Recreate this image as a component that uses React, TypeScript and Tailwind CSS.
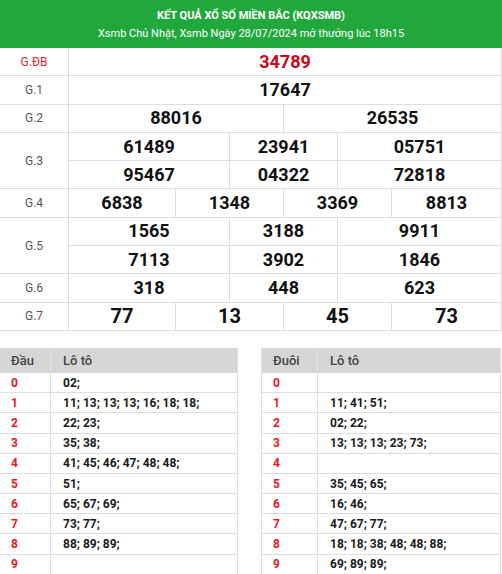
import React from "react";

const font = { fontFamily: "Roboto, 'Noto Sans', Arial, sans-serif" };

function Num({ children, big, red }: { children: React.ReactNode; big?: boolean; red?: boolean }) {
  return (
    <span
      className={`font-bold ${big ? "text-[20px]" : "text-[18px]"} ${red ? "text-[#d0021b]" : "text-[#111]"} leading-none`}
    >
      {children}
    </span>
  );
}

function Cell({ children, last }: { children: React.ReactNode; last?: boolean }) {
  return (
    <div className={`flex items-center justify-center ${last ? "" : "border-r border-[#dedede]"}`}>{children}</div>
  );
}

function Row({
  label,
  red,
  rows,
  cols,
}: {
  label: string;
  red?: boolean;
  rows: { nums: string[]; big?: boolean; red?: boolean }[];
  cols: string;
}) {
  return (
    <div className="flex">
      <div
        className={`w-[69px] shrink-0 border-r border-b border-[#dedede] flex items-center justify-center text-[12px] ${
          red ? "text-[#e8262d]" : "text-[#555]"
        }`}
      >
        {label}
      </div>
      <div className="flex-1 flex flex-col">
        {rows.map((r, i) => (
          <div key={i} className={`grid ${cols} h-[28.3px] border-b border-[#dedede]`}>
            {r.nums.map((n, j) => (
              <Cell key={j} last={j === r.nums.length - 1}>
                <Num big={r.big} red={r.red}>
                  {n}
                </Num>
              </Cell>
            ))}
          </div>
        ))}
      </div>
    </div>
  );
}

const dau: [string, string][] = [
  ["0", "02;"],
  ["1", "11; 13; 13; 13; 16; 18; 18;"],
  ["2", "22; 23;"],
  ["3", "35; 38;"],
  ["4", "41; 45; 46; 47; 48; 48;"],
  ["5", "51;"],
  ["6", "65; 67; 69;"],
  ["7", "73; 77;"],
  ["8", "88; 89; 89;"],
  ["9", ""],
];

const duoi: [string, string][] = [
  ["0", ""],
  ["1", "11; 41; 51;"],
  ["2", "02; 22;"],
  ["3", "13; 13; 13; 23; 73;"],
  ["4", ""],
  ["5", "35; 45; 65;"],
  ["6", "16; 46;"],
  ["7", "47; 67; 77;"],
  ["8", "18; 18; 38; 48; 48; 88;"],
  ["9", "69; 89; 89;"],
];

function LotoTable({
  title,
  data,
  firstW,
  className,
}: {
  title: string;
  data: [string, string][];
  firstW: string;
  className: string;
}) {
  return (
    <div className={className}>
      <div className="flex h-[25px] bg-[#d6d6d6] text-[13px] font-medium text-[#444]">
        <div className={`${firstW} shrink-0 flex items-center pl-[11px] border-r border-[#e4e4e4]`}>{title}</div>
        <div className="flex-1 flex items-center pl-[12px]">Lô tô</div>
      </div>
      {data.map(([d, v]) => (
        <div key={d} className="flex h-[20.2px] border-b border-[#dedede] text-[12px] font-bold">
          <div className={`${firstW} shrink-0 flex items-center pl-[11px] border-r border-[#dedede] text-[#f0141e]`}>
            {d}
          </div>
          <div className="flex-1 flex items-center pl-[12px] text-[#1a1a1a]">{v}</div>
        </div>
      ))}
    </div>
  );
}

export default function App() {
  return (
    <div className="w-[502px] bg-white" style={font}>
      <div className="h-[48px] bg-[#21a83c] flex flex-col items-center justify-center text-white pt-[1px]">
        <div className="text-[11px] font-bold leading-[15px]">KẾT QUẢ XỔ SỐ MIỀN BẮC (KQXSMB)</div>
        <div className="text-[11px] leading-[15px] mt-[3px]">
          Xsmb Chủ Nhật, Xsmb Ngày 28/07/2024 mở thưởng lúc 18h15
        </div>
      </div>
      <div className="border-r border-[#dedede]">
        <Row label="G.ĐB" red cols="grid-cols-1" rows={[{ nums: ["34789"], red: true }]} />
        <Row label="G.1" cols="grid-cols-1" rows={[{ nums: ["17647"] }]} />
        <Row label="G.2" cols="grid-cols-[215px_1fr]" rows={[{ nums: ["88016", "26535"] }]} />
        <Row
          label="G.3"
          cols="grid-cols-[161px_108px_1fr]"
          rows={[{ nums: ["61489", "23941", "05751"] }, { nums: ["95467", "04322", "72818"] }]}
        />
        <Row
          label="G.4"
          cols="grid-cols-[107px_108px_108px_1fr]"
          rows={[{ nums: ["6838", "1348", "3369", "8813"] }]}
        />
        <Row
          label="G.5"
          cols="grid-cols-[161px_108px_1fr]"
          rows={[{ nums: ["1565", "3188", "9911"] }, { nums: ["7113", "3902", "1846"] }]}
        />
        <Row label="G.6" cols="grid-cols-[161px_108px_1fr]" rows={[{ nums: ["318", "448", "623"] }]} />
        <Row
          label="G.7"
          cols="grid-cols-[107px_108px_108px_1fr]"
          rows={[{ nums: ["77", "13", "45", "73"], big: true }]}
        />
      </div>
      <div className="flex justify-between mt-[17px]">
        <LotoTable title="Đầu" data={dau} firstW="w-[51px]" className="w-[238px] border-r border-[#dedede]" />
        <LotoTable
          title="Đuôi"
          data={duoi}
          firstW="w-[56px]"
          className="w-[240px] mr-[1px] border-l border-r border-[#dedede]"
        />
      </div>
    </div>
  );
}
